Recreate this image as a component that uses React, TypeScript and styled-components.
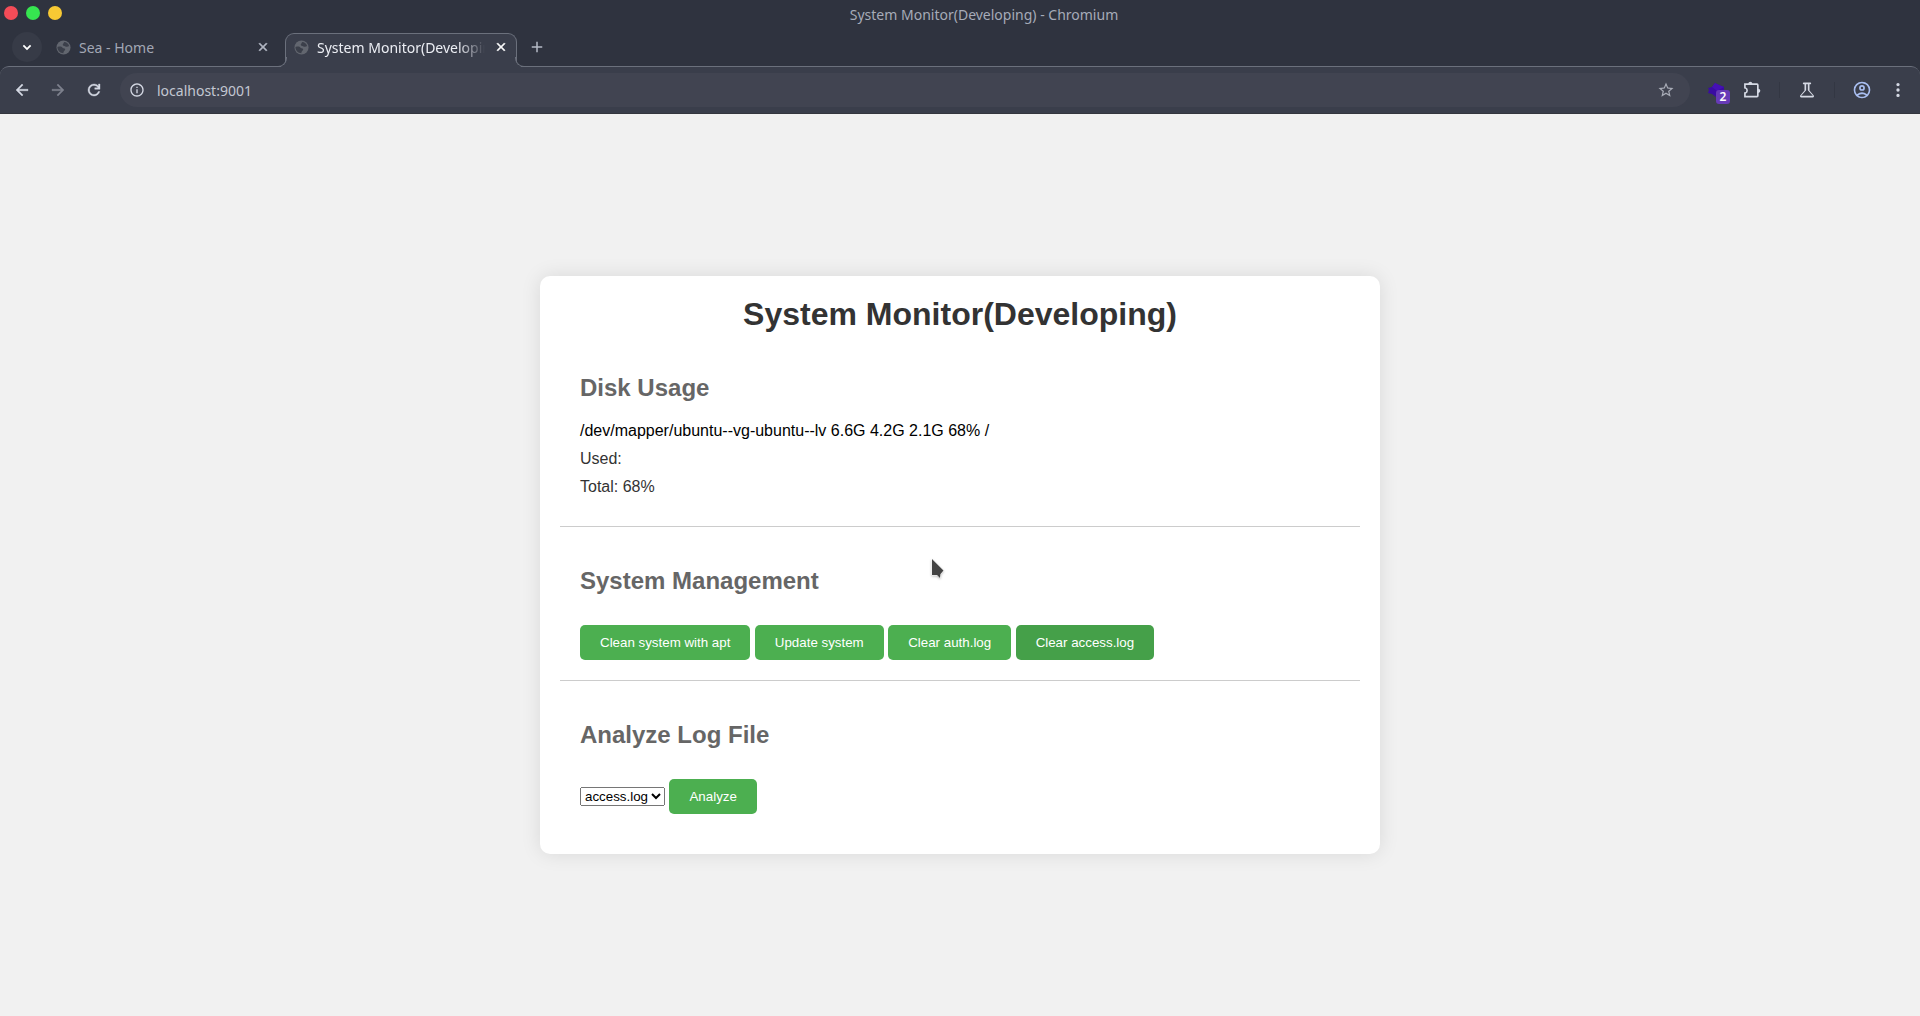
import React from 'react';
import styled, { createGlobalStyle } from 'styled-components';

const Global = createGlobalStyle`
  html, body, #root { height: 100%; }
  body { margin: 0; background: #f1f1f1; }
  *, *::before, *::after { box-sizing: border-box; }
`;

const Window = styled.div`
  min-height: 100%;
  display: flex;
  flex-direction: column;
  font-family: Arial, "Liberation Sans", sans-serif;
  font-size: 16px;
`;

const Chrome = styled.header`
  background: #2f333f;
  color: #a6abb8;
  font-family: "Noto Sans", sans-serif;
  font-size: 14px;
`;

const TitleBar = styled.div`
  display: grid;
  grid-template-columns: 48px 1fr;
  align-items: center;
  height: 28px;
  padding: 0 4px;
`;

const Lights = styled.div`
  display: flex;
  gap: 8px;
  padding-bottom: 2px;
`;

const Light = styled.button<{ $color: string }>`
  flex: none;
  width: 14px;
  height: 14px;
  padding: 0;
  border: 0;
  border-radius: 50%;
  background: ${(p) => p.$color};
`;

const WindowTitle = styled.div`
  text-align: center;
`;

const Tabs = styled.nav`
  display: flex;
  align-items: center;
  height: 38px;
  padding-left: 12px;
`;

const Tab = styled.div<{ $active?: boolean }>`
  position: relative;
  display: flex;
  align-items: center;
  align-self: flex-end;
  gap: 8px;
  width: 243px;
  height: 33px;
  padding: 0 14px 5px;
  color: #a2a7b4;
  ${(p) =>
    p.$active &&
    `
    width: 232px;
    height: 34px;
    margin-bottom: -1px;
    padding: 0 7px 7px 8px;
    color: #eceef4;
    background: #3a3e4b;
    border: 1px solid #6b707c;
    border-bottom: 0;
    border-radius: 9px 9px 0 0;
    z-index: 1;
    &::before, &::after {
      content: "";
      position: absolute;
      bottom: 0;
      width: 10px;
      height: 10px;
      border-bottom: 1px solid #6b707c;
      clip-path: inset(0);
    }
    &::before {
      right: 100%;
      margin-right: -1px;
      border-right: 1px solid #6b707c;
      border-bottom-right-radius: 9px;
      box-shadow: 4px 4px 0 0 #3a3e4b;
    }
    &::after {
      left: 100%;
      margin-left: -1px;
      border-left: 1px solid #6b707c;
      border-bottom-left-radius: 9px;
      box-shadow: -4px 4px 0 0 #3a3e4b;
    }
  `}
`;

const TabLabel = styled.span<{ $fade?: boolean }>`
  flex: 1;
  min-width: 0;
  overflow: hidden;
  white-space: nowrap;
  ${(p) => p.$fade && 'mask-image: linear-gradient(to right, #000 84%, transparent 100%);'}
`;

const IconButton = styled.button<{ $size?: number; $tone?: string; $round?: boolean }>`
  flex: none;
  display: flex;
  align-items: center;
  justify-content: center;
  width: ${(p) => p.$size ?? 36}px;
  height: ${(p) => p.$size ?? 36}px;
  padding: 0;
  border: 0;
  border-radius: 50%;
  background: ${(p) => (p.$round ? '#373b47' : 'transparent')};
  color: ${(p) => p.$tone ?? '#d5d9e4'};
`;

const NewTab = styled(IconButton)`
  margin-left: 2px;
`;

const Toolbar = styled.div`
  display: flex;
  align-items: center;
  height: 48px;
  padding: 0 4px;
  background: #3a3e4b;
  border-top: 1px solid #6b707c;
  border-bottom: 1px solid #34363e;
  border-radius: 9px 9px 0 0;
`;

const AddressBar = styled.div`
  flex: 1;
  display: flex;
  align-items: center;
  height: 34px;
  margin-left: 8px;
  padding: 0 11px 0 4px;
  border-radius: 17px;
  background: #414451;
`;

const Address = styled.input`
  flex: 1;
  min-width: 0;
  margin-left: 7px;
  padding: 0;
  border: 0;
  outline: 0;
  background: transparent;
  color: #c3c7d2;
  font-family: "Noto Sans", sans-serif;
  font-size: 14px;
`;

const Extensions = styled.div`
  display: flex;
  align-items: center;
  margin-left: 8px;
`;

const Divider = styled.span`
  width: 1px;
  height: 16px;
  margin: 0 9px;
  background: #333743;
`;

const ExtensionButton = styled(IconButton)`
  position: relative;
`;

const Badge = styled.span`
  position: absolute;
  right: 4px;
  bottom: 4px;
  width: 14px;
  height: 14px;
  border-radius: 3px;
  background: #673ab7;
  color: #fff;
  font: 600 12px/14px "Noto Sans", sans-serif;
  text-align: center;
`;

const Page = styled.main`
  flex: 1;
  display: flex;
  align-items: center;
  justify-content: center;
  background: #f1f1f1;
`;

const Card = styled.div`
  width: 100%;
  max-width: 840px;
  padding: 20px;
  border-radius: 10px;
  background: #fff;
  box-shadow: 0 0 20px rgba(0, 0, 0, 0.1);
`;

const Title = styled.h1`
  margin: 0 0 21px;
  color: #333;
  font-size: 32px;
  text-align: center;
`;

const Section = styled.section`
  margin-bottom: 20px;
  padding: 20px;
  border-bottom: 1px solid #ccc;
  &:last-child {
    margin-bottom: 0;
    border-bottom: 0;
  }
`;

const Heading = styled.h2`
  margin: 0 0 20px;
  color: #666;
  font-size: 24px;
`;

const Line = styled.p<{ $strong?: boolean }>`
  margin: 0 0 10px;
  color: ${(p) => (p.$strong ? '#000' : '#333')};
`;

const Action = styled.button<{ $hover?: boolean }>`
  margin-top: 10px;
  padding: 10px 20px;
  border: 0;
  border-radius: 5px;
  background: ${(p) => (p.$hover ? '#45a049' : '#4caf50')};
  color: #fff;
  font-family: Arial, "Liberation Sans", sans-serif;
`;

const LogSelect = styled.select`
  font-family: Arial, "Liberation Sans", sans-serif;
`;

const Pointer = styled.svg`
  position: fixed;
  left: 930px;
  top: 557px;
  pointer-events: none;
  filter: drop-shadow(0 1px 1px rgba(0, 0, 0, 0.25));
`;

const Material = ({ d, size = 20, bold = 0 }: { d: string; size?: number; bold?: number }) => (
  <svg
    width={size}
    height={size}
    viewBox="0 0 24 24"
    fill="currentColor"
    stroke="currentColor"
    strokeWidth={bold}
    aria-hidden="true"
  >
    <path d={d} />
  </svg>
);

const icons = {
  back: 'M20 11H7.83l5.59-5.59L12 4l-8 8 8 8 1.41-1.41L7.83 13H20z',
  forward: 'M12 4l-1.41 1.41L16.17 11H4v2h12.17l-5.58 5.59L12 20l8-8z',
  reload: 'M12 20q-3.35 0-5.675-2.325T4 12t2.325-5.675T12 4q1.725 0 3.3.713T18 6.75V4h2v7h-7V9h4.2q-.8-1.4-2.188-2.2T12 6Q9.500 6 7.750 7.750T6 12t1.750 4.250T12 18q1.925 0 3.475-1.100T17.650 14h2.100q-.7 2.650-2.850 4.325T12 20z',
  info: 'M11 7h2v2h-2zm0 4h2v6h-2zm1-9C6.480 2 2 6.480 2 12s4.480 10 10 10 10-4.480 10-10S17.520 2 12 2zm0 18c-4.410 0-8-3.590-8-8s3.590-8 8-8 8 3.590 8 8-3.590 8-8 8z',
  star: 'M22 9.240l-7.190-.62L12 2 9.190 8.630 2 9.240l5.460 4.730L5.820 21 12 17.270 18.180 21l-1.630-7.030L22 9.240zM12 15.400l-3.760 2.270 1-4.280-3.320-2.880 4.380-.38L12 6.100l1.710 4.040 4.380.38-3.320 2.880 1 4.280L12 15.400z',
  extension: 'M10 2a2.500 2.500 0 0 1 2.450 2H18a2 2 0 0 1 2 2v4.550a2.500 2.500 0 0 1 0 4.900V19a2 2 0 0 1-2 2H2.500v-6.300H3a2.200 2.200 0 0 0 0-4.400h-.5V4h5.050A2.500 2.500 0 0 1 10 2zM4.500 6v2.600a4.200 4.200 0 0 1 0 7.800V19H18V6z',
  flask: 'M5 21q-.9 0-1.275-.8t.2-1.500L9 12.500V5H8q-.425 0-.7125-.2875T7 4t.2875-.7125T8 3h8q.425 0 .7125.2875T17 4t-.2875.7125T16 5h-1v7.500l5.075 6.200q.575.7.2 1.500T19 21zm0-2h14l-6-6.700V5h-2v7.300z',
  person: 'M12 2a10 10 0 1 0 0 20 10 10 0 0 0 0-20zM7.350 18.500C8.660 17.560 10.260 17 12 17s3.340.56 4.650 1.500C15.340 19.440 13.740 20 12 20s-3.340-.56-4.650-1.500zm10.790-1.380a9.950 9.950 0 0 0-12.280 0A8 8 0 1 1 20 12c0 1.950-.7 3.730-1.860 5.120zM12 6a3.500 3.500 0 1 0 0 7 3.500 3.500 0 0 0 0-7zm0 5a1.500 1.500 0 1 1 0-3 1.500 1.500 0 0 1 0 3z',
  more: 'M12 7.500a2 2 0 1 0 0-4 2 2 0 0 0 0 4zm0 6.500a2 2 0 1 0 0-4 2 2 0 0 0 0 4zm0 6.500a2 2 0 1 0 0-4 2 2 0 0 0 0 4z',
  close: 'M19 6.410 17.590 5 12 10.590 6.410 5 5 6.410 10.590 12 5 17.590 6.410 19 12 13.410 17.590 19 19 17.590 13.410 12z',
  down: 'M6 7.400l6 6 6-6L20.500 9.800 12 18.300 3.500 9.800z',
  plus: 'M19 13h-6v6h-2v-6H5v-2h6V5h2v6h6z',
};

const Globe = () => (
  <svg width="15" height="15" viewBox="0 0 16 16" aria-hidden="true">
    <circle cx="8" cy="8" r="7.500" fill="#62666f" />
    <path
      d="M1.500 7.500c3-1 4.500-.5 5.500.7 1 1 3 .3 2.800 1.800-.3 1.500-1.800 1.500-2 4C4.500 14 1.500 11.500 1.500 7.500z M8.500 2c2.800 0 5 2 5.500 4.500-1.500 1-3 .8-4 .3C8.500 6.500 7 6.300 7.200 4.900c.1-1.200 1.300-1 1.300-2.900z"
      fill="#3b3f4a"
    />
  </svg>
);

const Cube = () => (
  <svg width="18" height="16" viewBox="0 0 18 16" aria-hidden="true">
    <path d="M1 6l4-1 3-4 4 2 5 2v6l-8 4-4-3-4-1 1-3z" fill="#3a0ca3" />
    <path d="M5 5l3-4 4 2 5 2-7 4z" fill="#4510b5" />
  </svg>
);

export default function App() {
  return (
    <Window>
      <Global />
      <Chrome>
        <TitleBar>
          <Lights>
            <Light $color="#f44c58" aria-label="Close window" />
            <Light $color="#36e550" aria-label="Minimize window" />
            <Light $color="#f7c934" aria-label="Maximize window" />
          </Lights>
          <WindowTitle>System Monitor(Developing) - Chromium</WindowTitle>
        </TitleBar>
        <Tabs>
          <IconButton $size={30} $round $tone="#fff" aria-label="Search tabs">
            <Material d={icons.down} size={12} />
          </IconButton>
          <Tab>
            <Globe />
            <TabLabel>Sea - Home</TabLabel>
            <IconButton $size={16} $tone="#b5bac6" aria-label="Close tab">
              <Material d={icons.close} size={14} bold={1} />
            </IconButton>
          </Tab>
          <Tab $active>
            <Globe />
            <TabLabel $fade>System Monitor(Developing)</TabLabel>
            <IconButton $size={16} $tone="#fff" aria-label="Close tab">
              <Material d={icons.close} size={14} bold={1} />
            </IconButton>
          </Tab>
          <NewTab $tone="#b5bac6" aria-label="New tab">
            <Material d={icons.plus} size={18} />
          </NewTab>
        </Tabs>
        <Toolbar>
          <IconButton aria-label="Back"><Material d={icons.back} size={18} bold={0.5} /></IconButton>
          <IconButton $tone="#7d818d" aria-label="Forward"><Material d={icons.forward} size={18} bold={0.5} /></IconButton>
          <IconButton aria-label="Reload"><Material d={icons.reload} size={18} bold={0.5} /></IconButton>
          <AddressBar>
            <IconButton $size={26} aria-label="Site information"><Material d={icons.info} size={16} /></IconButton>
            <Address aria-label="Address" defaultValue="localhost:9001" />
            <IconButton $size={26} $tone="#a9adb8" aria-label="Bookmark"><Material d={icons.star} size={18} /></IconButton>
          </AddressBar>
          <Extensions>
            <ExtensionButton aria-label="Extension">
              <Cube />
              <Badge>2</Badge>
            </ExtensionButton>
            <IconButton aria-label="Extensions"><Material d={icons.extension} size={20} /></IconButton>
            <Divider />
            <IconButton aria-label="Experiments"><Material d={icons.flask} size={20} /></IconButton>
            <Divider />
            <IconButton $tone="#a9bef0" aria-label="Profile"><Material d={icons.person} size={20} /></IconButton>
            <IconButton aria-label="Menu"><Material d={icons.more} size={20} /></IconButton>
          </Extensions>
        </Toolbar>
      </Chrome>
      <Page>
        <Card>
          <Title>System Monitor(Developing)</Title>
          <Section>
            <Heading>Disk Usage</Heading>
            <Line $strong>/dev/mapper/ubuntu--vg-ubuntu--lv 6.6G 4.2G 2.1G 68% /</Line>
            <Line>Used:</Line>
            <Line>Total: 68%</Line>
          </Section>
          <Section>
            <Heading>System Management</Heading>
            <Action>Clean system with apt</Action>{' '}
            <Action>Update system</Action>{' '}
            <Action>Clear auth.log</Action>{' '}
            <Action $hover>Clear access.log</Action>
          </Section>
          <Section>
            <Heading>Analyze Log File</Heading>
            <LogSelect aria-label="Log file" defaultValue="access.log">
              <option>access.log</option>
              <option>auth.log</option>
            </LogSelect>{' '}
            <Action>Analyze</Action>
          </Section>
        </Card>
      </Page>
      <Pointer width="18" height="26" viewBox="0 0 18 26" aria-hidden="true">
        <path d="M2 2v16h5l3 3 .5-4 3-3.500z" fill="#444" stroke="#fff" strokeWidth="1" paintOrder="stroke" />
      </Pointer>
    </Window>
  );
}
